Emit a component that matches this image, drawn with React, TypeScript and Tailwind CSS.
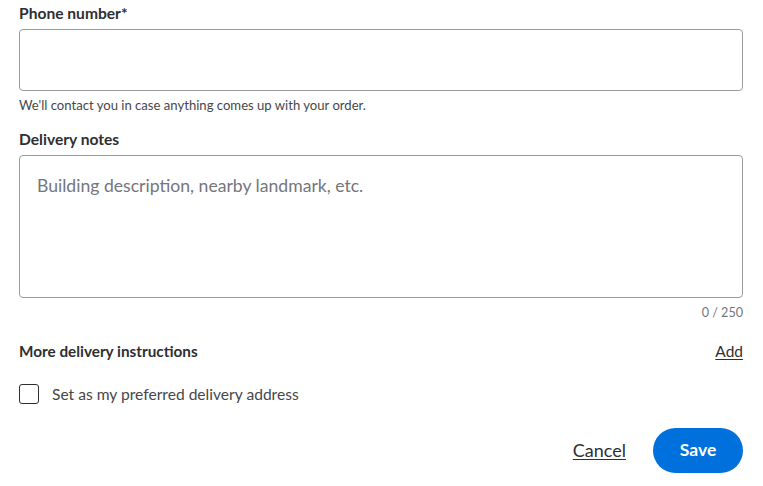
import React, { useState } from 'react';

const App = () => {
  const [notes, setNotes] = useState('');
  const [preferred, setPreferred] = useState(false);

  return (
    <div className="bg-white w-full min-h-screen pl-[19px] pr-[20px] text-[#2e2f32]" style={{ fontFamily: 'Lato, "Open Sans", sans-serif' }}>
      <div className="pt-[3px] text-[15.6px] leading-[20px] font-bold">Phone number*</div>
      <input
        type="tel"
        className="mt-[6px] block w-full h-[62px] border border-[#9a9b9f] rounded-[4px] px-4 text-[16px] outline-none"
      />
      <div className="mt-[6px] text-[13.1px] leading-[16px] text-[#46474a]">
        We'll contact you in case anything comes up with your order.
      </div>

      <div className="mt-[16px] text-[15.6px] leading-[20px] font-bold">Delivery notes</div>
      <textarea
        value={notes}
        maxLength={250}
        onChange={(e) => setNotes(e.target.value)}
        placeholder="Building description, nearby landmark, etc."
        className="mt-[6px] block w-full h-[143px] border border-[#9a9b9f] rounded-[4px] pl-[17px] pr-4 pt-[18px] text-[17.6px] leading-[24px] resize-none outline-none placeholder:text-[#74767c]"
      />
      <div className="mt-[7px] text-right text-[12.6px] leading-[16px] text-[#74767c]">{notes.length} / 250</div>

      <div className="mt-[20px] flex items-center justify-between leading-[20px]">
        <span className="text-[15.3px] font-bold">More delivery instructions</span>
        <button className="text-[15.5px] underline underline-offset-2">Add</button>
      </div>

      <label className="mt-[23px] flex items-center gap-[13px] cursor-pointer">
        <span
          onClick={() => setPreferred(!preferred)}
          className="w-[20px] h-[20px] border-[1.5px] border-[#2e2f32] rounded-[3px] flex items-center justify-center"
        >
          {preferred && <span className="text-[13px] leading-none">✓</span>}
        </span>
        <span className="text-[15.6px] leading-[20px] text-[#46474a]">Set as my preferred delivery address</span>
      </label>

      <div className="mt-[24px] flex items-center justify-end gap-[27px]">
        <button className="text-[18px] underline underline-offset-2">Cancel</button>
        <button className="w-[90px] h-[45px] rounded-full bg-[#0071dc] text-white text-[17.5px] font-bold">Save</button>
      </div>
    </div>
  );
};

export default App;
